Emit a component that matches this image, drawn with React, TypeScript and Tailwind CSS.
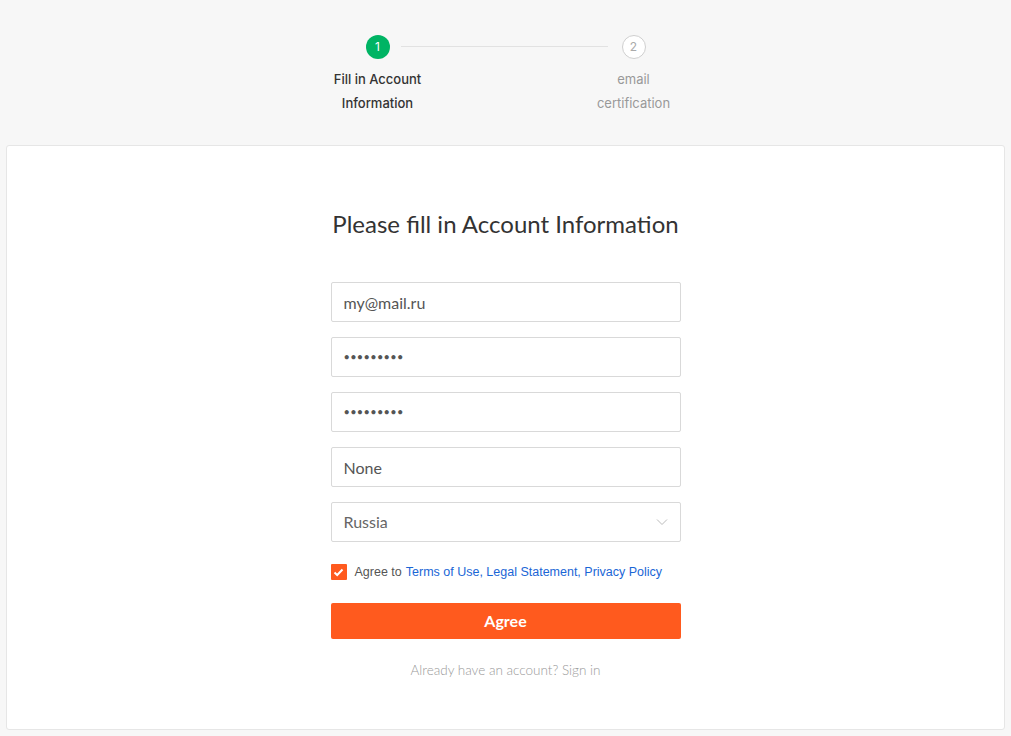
import React from "react";

export default function App() {
  return (
    <div className="min-h-[736px] w-full bg-[#f7f7f7] pb-[6px]">
      {/* Steps */}
      <div className="flex h-[145px] justify-center pt-[35px] font-['Inter',sans-serif]">
        <div className="flex w-6 flex-col items-center">
          <div className="flex h-6 w-6 items-center justify-center rounded-full bg-[#00b464] text-[12px] text-white">1</div>
          <div className="mt-[8px] w-[120px] shrink-0 text-center text-[13px] font-medium leading-6 text-[#333]">
            Fill in Account Information
          </div>
        </div>
        <div className="ml-[11px] mr-[14px] mt-[11px] h-px w-[207px] bg-[#e2e2e2]" />
        <div className="flex w-6 flex-col items-center">
          <div className="flex h-6 w-6 items-center justify-center rounded-full border border-[#cfcfcf] bg-white text-[12px] text-[#aaa]">2</div>
          <div className="mt-[8px] w-[96px] shrink-0 text-center text-[13px] leading-6 text-[#999]">
            email certification
          </div>
        </div>
      </div>

      {/* Card */}
      <div className="mx-[6px] flex h-[585px] flex-col items-center rounded-[3px] border border-[#e6e6e6] bg-white pt-[62px]">
        <h1 className="font-['Lato',sans-serif] text-[24px] leading-8 text-[#333]">
          Please fill in Account Information
        </h1>
        <div className="mt-[42px] flex w-[350px] flex-col gap-[15px] font-['Lato',sans-serif]">
          <input
            readOnly
            value="my@mail.ru"
            className="h-10 w-full rounded-[2px] border border-[#d9d9d9] px-3 text-[16px] text-[#555] outline-none"
          />
          <div className="flex h-10 w-full items-center rounded-[2px] border border-[#d9d9d9] px-3 text-[#555]">
            <span className="text-[11px] tracking-[0.3px]">•••••••••</span>
          </div>
          <div className="flex h-10 w-full items-center rounded-[2px] border border-[#d9d9d9] px-3 text-[#555]">
            <span className="text-[11px] tracking-[0.3px]">•••••••••</span>
          </div>
          <input
            readOnly
            value="None"
            className="h-10 w-full rounded-[2px] border border-[#d9d9d9] px-3 text-[16px] text-[#555] outline-none"
          />
          <div className="flex h-10 w-full items-center justify-between rounded-[2px] border border-[#d9d9d9] pl-3 pr-[12px] text-[16px] text-[#666]">
            <span>Russia</span>
            <svg width="12" height="8" viewBox="0 0 12 8" fill="none">
              <polyline points="1,1.5 6,6.5 11,1.5" stroke="#bbb" strokeWidth="1" />
            </svg>
          </div>
        </div>

        <div className="mt-[22px] flex w-[350px] items-center font-['Liberation_Sans',sans-serif] text-[12.5px] leading-4">
          <span className="flex h-4 w-4 items-center justify-center rounded-[1px] bg-[#ff5a1e]">
            <svg width="11" height="9" viewBox="0 0 11 9" fill="none">
              <polyline points="1.5,4.5 4.2,7 9.5,1.5" stroke="white" strokeWidth="2" />
            </svg>
          </span>
          <span className="ml-2 text-[#555]">Agree to</span>
          <span className="ml-[4px] text-[#1a66d6]">Terms of Use, Legal Statement, Privacy Policy</span>
        </div>

        <button className="mt-[23px] h-9 w-[350px] rounded-[2px] bg-[#ff5a1e] font-['Lato',sans-serif] text-[16px] font-bold text-white">
          Agree
        </button>

        <div className="mt-[21px] font-['Lato',sans-serif] text-[13.5px] font-light leading-5 text-[#999]">
          Already have an account? Sign in
        </div>
      </div>
    </div>
  );
}
